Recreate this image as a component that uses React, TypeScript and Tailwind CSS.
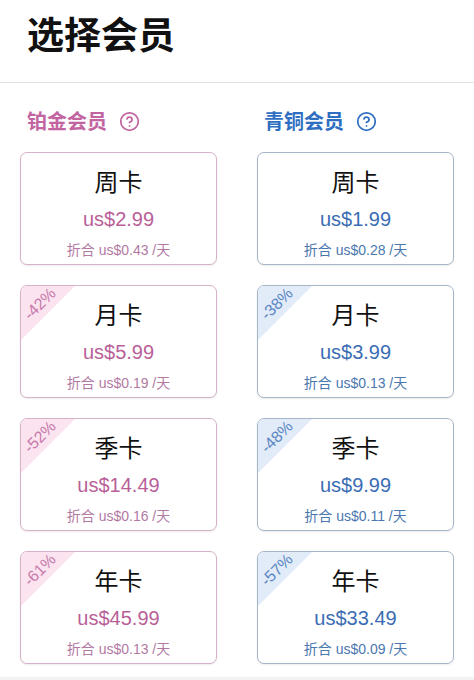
import React from 'react';

type Plan = {
  name: string;
  price: string;
  perDay: string;
  off?: string;
};

const platinum: Plan[] = [
  { name: '周卡', price: 'us$2.99', perDay: 'us$0.43' },
  { name: '月卡', price: 'us$5.99', perDay: 'us$0.19', off: '-42%' },
  { name: '季卡', price: 'us$14.49', perDay: 'us$0.16', off: '-52%' },
  { name: '年卡', price: 'us$45.99', perDay: 'us$0.13', off: '-61%' },
];

const bronze: Plan[] = [
  { name: '周卡', price: 'us$1.99', perDay: 'us$0.28' },
  { name: '月卡', price: 'us$3.99', perDay: 'us$0.13', off: '-38%' },
  { name: '季卡', price: 'us$9.99', perDay: 'us$0.11', off: '-48%' },
  { name: '年卡', price: 'us$33.49', perDay: 'us$0.09', off: '-57%' },
];

const themes = {
  pink: {
    head: 'text-[#c2649f]',
    border: 'border-[#d6b2c8]',
    price: 'text-[#b95f98]',
    sub: 'text-[#b27aa3]',
    badgeBg: 'bg-[#fbe3ef]',
    badgeText: 'text-[#c77aab]',
  },
  blue: {
    head: 'text-[#2f6fc2]',
    border: 'border-[#a6b6c9]',
    price: 'text-[#3a6db4]',
    sub: 'text-[#4a77ae]',
    badgeBg: 'bg-[#e2ebf8]',
    badgeText: 'text-[#5a87c4]',
  },
};

const HelpIcon = () => (
  <svg width="21" height="21" viewBox="0 0 24 24" fill="none" stroke="currentColor" strokeWidth="2" strokeLinecap="round" strokeLinejoin="round">
    <circle cx="12" cy="12" r="10" />
    <path d="M9.09 9a3 3 0 0 1 5.83 1c0 2-3 3-3 3" />
    <path d="M12 17h.01" />
  </svg>
);

const PlanCard = ({ plan, tone }: { plan: Plan; tone: 'pink' | 'blue' }) => {
  const t = themes[tone];
  return (
    <div className={`relative overflow-hidden h-[113px] rounded-[7px] border bg-white shadow-[0_1px_2px_rgba(0,0,0,0.08)] ${t.border}`}>
      {plan.off && (
        <div className="absolute left-0 top-0 w-[54px] h-[54px]">
          <div className={`absolute inset-0 [clip-path:polygon(0_0,100%_0,0_100%)] ${t.badgeBg}`} />
          <div className={`absolute left-[19px] top-[18px] -translate-x-1/2 -translate-y-1/2 -rotate-45 text-[16px] leading-none whitespace-nowrap ${t.badgeText}`}>
            {plan.off}
          </div>
        </div>
      )}
      <div className="relative flex flex-col items-center pt-[18px] gap-[14px]">
        <div className="text-[24px] leading-none text-[#111]">{plan.name}</div>
        <div className={`text-[20px] leading-none ${t.price}`}>{plan.price}</div>
        <div className={`text-[14px] leading-none ${t.sub}`}>
          折合 {plan.perDay} /天
        </div>
      </div>
    </div>
  );
};

const ColumnHead = ({ label, tone }: { label: string; tone: 'pink' | 'blue' }) => (
  <div className={`flex items-center gap-[12px] pl-[7px] ${themes[tone].head}`}>
    <span className="text-[20px] leading-none font-semibold">{label}</span>
    <HelpIcon />
  </div>
);

export default function App() {
  return (
    <div className="w-[474px] h-[680px] overflow-hidden bg-white font-['Liberation_Sans','Noto_Sans_CJK_SC',sans-serif]">
      <div className="h-[83px] border-b border-[#e2e2e2] pl-[27px] pt-[18px]">
        <h1 className="text-[37px] leading-none font-bold text-[#111]">选择会员</h1>
      </div>
      <div className="grid grid-cols-2 gap-x-[40px] px-[20px] pt-[28px]">
        <ColumnHead label="铂金会员" tone="pink" />
        <ColumnHead label="青铜会员" tone="blue" />
      </div>
      <div className="grid grid-cols-2 gap-x-[40px] gap-y-[20px] px-[20px] pt-[20px]">
        {platinum.map((p, i) => (
          <React.Fragment key={i}>
            <PlanCard plan={p} tone="pink" />
            <PlanCard plan={bronze[i]} tone="blue" />
          </React.Fragment>
        ))}
      </div>
      <div className="mt-[13px] h-[20px] bg-[#f2f2f2]" />
    </div>
  );
}
